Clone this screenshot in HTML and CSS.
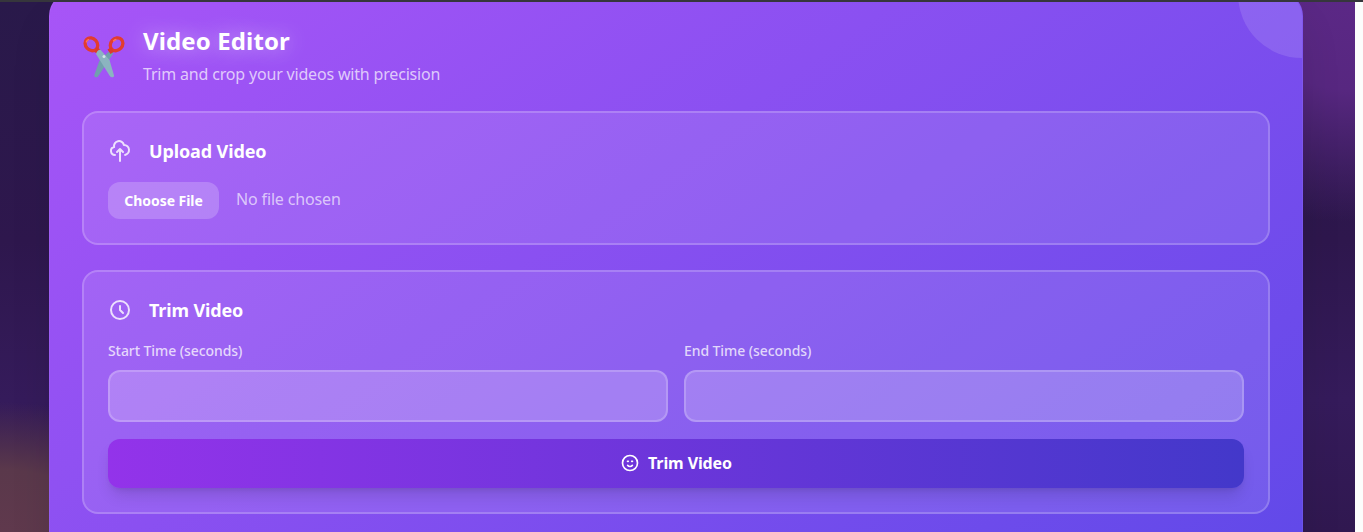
FILE: index.html
```html
<!DOCTYPE html>
<html lang="en">
<head>
<meta charset="utf-8">
<title>Video Editor</title>
<link rel="stylesheet" href="styles.css">
</head>
<body>
<div class="page">
  <main class="card">
    <span class="orb"></span>
    <header class="header">
      <svg class="scissors" viewBox="0 0 42 42" aria-hidden="true">
        <path d="M24.800 16.500q2-2.500 4-1.500l1.500 2.500L15 40.500c-1.200 1.600-4.300.8-3.700-1.500l5-14z" fill="#729fae"/>
        <g fill="none" stroke="#e23c30" stroke-width="3.300">
          <ellipse cx="8.400" cy="8.300" rx="5.800" ry="6.900" transform="rotate(-42 8.400 8.300)"/>
          <ellipse cx="33.600" cy="8.300" rx="5.800" ry="6.900" transform="rotate(42 33.600 8.300)"/>
        </g>
        <path d="M13.500 11l4 2.500-3 4.500-3-2zM28.500 11l-4 2.500 3 4.500 3-2z" fill="#dc392d"/>
        <path d="M17.300 13.500q-3.300.5-4.300 4.500l14 22.300c1.500 2 4.700 1 3.900-1.300L26.500 24z" fill="#8bb4c0"/>
        <circle cx="21" cy="20.500" r="1.500" fill="#d4e6ea"/>
        <path d="M3.300 6q.5-1.700 2.200-2.400M30.500 5q1-1.200 2.500-1.500" fill="none" stroke="#ff7658" stroke-width="1.300" stroke-linecap="round"/>
      </svg>
      <div>
        <h1 class="title">Video Editor</h1>
        <p class="subtitle">Trim and crop your videos with precision</p>
      </div>
    </header>

    <section class="panel upload">
      <div class="panel-head">
        <svg class="icon" viewBox="0 0 24 24"><path d="M7 16a4 4 0 01-.88-7.903A5 5 0 1115.9 6L16 6a5 5 0 011 9.900M15 13l-3-3m0 0l-3 3m3-3v12"/></svg>
        <h2 class="panel-title upload-title">Upload Video</h2>
      </div>
      <div class="file-row">
        <button class="choose" type="button"><span>Choose File</span></button>
        <span class="file-name">No file chosen</span>
      </div>
    </section>

    <section class="panel trim">
      <div class="panel-head">
        <svg class="icon" viewBox="0 0 24 24"><path d="M12 8v4l3 3m6-3a9 9 0 11-18 0 9 9 0 0118 0z"/></svg>
        <h2 class="panel-title trim-title">Trim Video</h2>
      </div>
      <div class="fields">
        <div><label class="label" for="start">Start Time (seconds)</label><input class="input" id="start"></div>
        <div><label class="label" for="end">End Time (seconds)</label><input class="input" id="end"></div>
      </div>
      <button class="submit" type="button">
        <svg class="smile" viewBox="0 0 24 24"><path d="M14.828 14.828a4 4 0 01-5.656 0M9 10h1m4 0h1m6 2a9 9 0 11-18 0 9 9 0 0118 0z"/></svg>
        <span>Trim Video</span>
      </button>
    </section>
  </main>
</div>
</body>
</html>
```
FILE: styles.css
```css
* { box-sizing: border-box; }
body {
  margin: 0;
  height: 532px;
  overflow: hidden;
  background: #fcfdfc;
  border-top: 2px solid #36363c;
  font-family: "Noto Sans", sans-serif;
  color: #fff;
}
h1, h2, p { margin: 0; }
.page {
  width: 1355px;
  height: 530px;
  overflow: hidden;
  padding: 0 52px 0 49px;
  background:
    radial-gradient(ellipse 240px 150px at 0 535px, #60394d 0%, #5a384b 45%, rgba(88, 52, 76, 0) 90%),
    radial-gradient(ellipse 240px 240px at 1350px -20px, #5c2887 0%, #572780 45%, rgba(62, 27, 102, 0) 100%),
    linear-gradient(180deg, #29194a 0%, #2e174d 45%, #351b5b 75%, #301850 100%);
}
.card {
  position: relative;
  height: 916px;
  margin-top: -10px;
  padding: 32px;
  border: 1px solid rgba(255, 255, 255, .06);
  border-radius: 24px;
  overflow: hidden;
  background: linear-gradient(145deg, #a855f7, #4f46e5) border-box;
  box-shadow: 0 25px 50px -12px rgba(0, 0, 0, .15);
}
.orb {
  position: absolute;
  top: -63px;
  right: -64px;
  width: 128px;
  height: 128px;
  border-radius: 50%;
  background: rgba(255, 255, 255, .12);
}
.header {
  display: flex;
  height: 86px;
  padding-left: 1px;
}
.scissors { width: 42px; height: 42px; margin: 11px 18px 0 0; }
.title {
  font-size: 24px;
  line-height: 31px;
  font-weight: 700;
  letter-spacing: .12px;
  text-shadow: 0 0 20px rgba(255, 255, 255, .5);
}
.subtitle {
  margin-top: 6px;
  font-size: 16px;
  line-height: 24px;
  letter-spacing: -.18px;
  color: rgba(255, 255, 255, .7);
}
.panel {
  padding: 24px;
  border: 2px solid rgba(255, 255, 255, .2);
  border-radius: 16px;
  background: rgba(255, 255, 255, .1);
}
.upload { height: 134px; }
.trim { height: 244px; margin-top: 25px; }
.panel-head { display: flex; align-items: center; gap: 17px; height: 28px; }
.icon, .smile {
  fill: none;
  stroke: rgba(255, 255, 255, .8);
  stroke-width: 2;
  stroke-linecap: round;
  stroke-linejoin: round;
}
.icon { width: 24px; height: 24px; }
.panel-title { font-size: 18px; line-height: 28px; font-weight: 700; }
.upload-title { letter-spacing: -.12px; }
.trim-title { letter-spacing: -.15px; }
.file-row { display: flex; align-items: center; gap: 17px; margin-top: 17px; }
.choose {
  width: 111px;
  height: 37px;
  padding: 0;
  border: 0;
  border-radius: 12px;
  background: rgba(255, 255, 255, .2);
  color: #fff;
  font: 700 14px/20px "Noto Sans", sans-serif;
  letter-spacing: -.05px;
}
.file-name {
  padding-bottom: 3px;
  font-size: 16px;
  letter-spacing: -.15px;
  color: rgba(255, 255, 255, .65);
}
.fields { display: grid; grid-template-columns: 1fr 1fr; gap: 16px; margin-top: 16px; }
.label {
  display: block;
  height: 30px;
  padding-top: 1px;
  font-size: 14px;
  line-height: 20px;
  font-weight: 500;
  letter-spacing: -.08px;
  color: rgba(255, 255, 255, .75);
}
.input {
  display: block;
  width: 100%;
  height: 52px;
  border: 2px solid rgba(255, 255, 255, .2);
  border-radius: 12px;
  background: rgba(255, 255, 255, .2);
}
.submit {
  display: flex;
  align-items: center;
  justify-content: center;
  gap: 8px;
  width: 100%;
  height: 49px;
  margin-top: 17px;
  padding: 0 0 2px;
  border: 0;
  border-radius: 12px;
  background: linear-gradient(90deg, #9333ea, #4338ca);
  box-shadow: 0 10px 15px -3px rgba(0, 0, 0, .12), 0 4px 6px -4px rgba(0, 0, 0, .12);
  color: #fff;
  font: 700 16px/24px "Noto Sans", sans-serif;
  letter-spacing: -.1px;
}
.smile { width: 20px; height: 20px; stroke: #fff; }
```
